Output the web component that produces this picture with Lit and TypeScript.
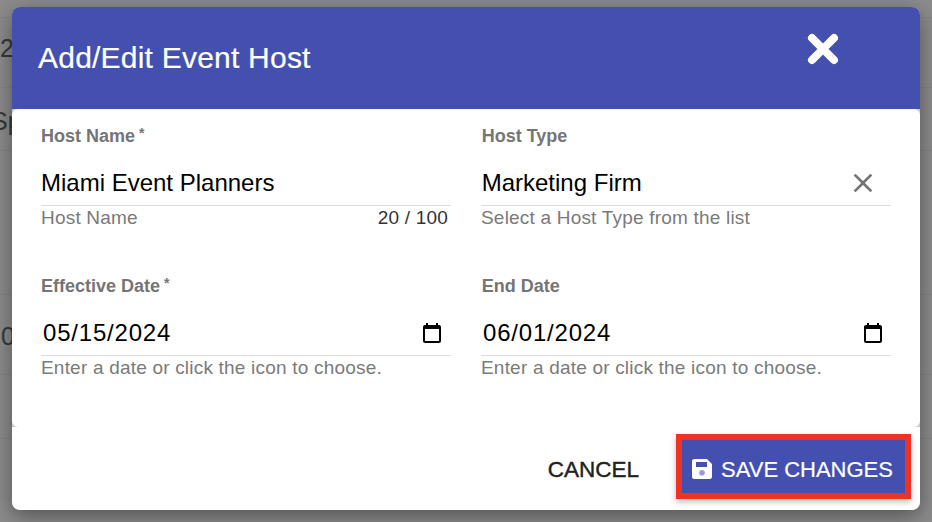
import { LitElement, html, css } from "lit";
import { customElement } from "lit/decorators.js";

const field = (label: string, req: boolean, value: string, helper: string, icon: unknown, counter = "", cls = "") => html`
  <div class="field ${cls}">
    <div class="label">${label}${req ? html`<span class="req">*</span>` : ""}</div>
    <div class="input"><span class="value">${value}</span>${icon}</div>
    <div class="help"><span>${helper}</span>${counter ? html`<span class="counter">${counter}</span>` : ""}</div>
  </div>`;

const cal = html`<svg class="cal" viewBox="0 0 24 24" width="24" height="24"><path fill="#000" fill-rule="evenodd" d="M19 4h-1V2h-2v2H8V2H6v2H5c-1.1 0-2 .9-2 2v14c0 1.1.9 2 2 2h14c1.1 0 2-.9 2-2V6c0-1.1-.9-2-2-2zm0 16H5V8h14v12z"/></svg>`;
const clear = html`<svg class="clear" viewBox="0 0 24 24" width="32" height="32"><path fill="#757575" d="M19 6.41 17.59 5 12 10.59 6.41 5 5 6.41 10.59 12 5 17.59 6.41 19 12 13.41 17.59 19 19 17.59 13.41 12z"/></svg>`;

@customElement("app-root")
export class AppRoot extends LitElement {
  static styles = css`
    :host { display: block; width: 932px; height: 522px; position: relative; overflow: hidden; background: #8c8c8c; font-family: "Liberation Sans", Arial, sans-serif; box-sizing: border-box; padding: 7px 12px 12px; }
    * { box-sizing: border-box; }
    .bg { position: absolute; font-size: 25px; color: #383838; line-height: 28px; }
    .rule { position: absolute; left: 0; width: 100%; height: 1px; background: #858585; }
    .dialog { position: relative; height: 503px; width: 908px; background: #c9c9c9; border-radius: 8px; box-shadow: 0 6px 22px rgba(0,0,0,.42); display: flex; flex-direction: column; overflow: hidden; }
    .head { height: 102px; background: #4450b0; display: flex; color: #fff; padding: 30px 26px 0; justify-content: space-between; flex: none; }
    .title { font-size: 30px; line-height: 42px; letter-spacing: .22px; -webkit-text-stroke: .2px #fff; }
    .close { margin: -4px 55px 0 0; }
    .content { height: 318px; border-radius: 6px; background: #fff; display: grid; grid-template-columns: 410px 410px; column-gap: 30px; grid-auto-rows: 150px; padding: 15px 0 0 29px; flex: none; }
    .label { font-size: 18px; font-weight: 700; color: #757575; line-height: 24px; height: 24px; }
    .req { font-size: 14px; line-height: 0; margin-left: 4px; vertical-align: 4px; }
    .input { height: 51px; margin-top: 7px; border-bottom: 1px solid #dcdcdc; display: flex; align-items: center; justify-content: space-between; padding-top: 5px; }
    .value { font-size: 24px; color: #000; line-height: 30px; }
    .help { display: flex; justify-content: space-between; font-size: 19px; letter-spacing: .2px; color: #7a7a7a; line-height: 24px; padding-right: 3px; }
    .counter { color: #333; }
    .r .label { padding-left: .7px; }
    .r .value { margin-left: .7px; }
    .r .cal { margin-right: 6px; }
    .date .value, .r.date .value { margin-left: 2px; letter-spacing: .8px; }
    .cal { margin-right: 7px; }
    .clear { margin-right: 12px; }
    .foot { flex: 1; background: #fff; display: flex; justify-content: flex-end; align-items: center; padding: 0 9px 5px 0; gap: 37px; }
    .cancel { font-size: 22.5px; padding-top: 8px; color: #212121; -webkit-text-stroke: .4px #212121; }
    .save { width: 235px; height: 65px; background: #4450b0; border: 6px solid #ee3224; color: #fff; font-size: 22px; display: flex; align-items: center; justify-content: center; gap: 9px; box-shadow: 0 3px 6px rgba(0,0,0,.25); -webkit-text-stroke: .2px #fff; padding-right: 2px; }
    .save span { padding-top: 7px; }
    .save svg { margin-top: 5px; }
  `;

  render() {
    return html`
      ${[17, 87, 150, 294, 374, 438].map((y) => html`<div class="rule" style="top:${y}px"></div>`)}
      <div class="bg" style="top:34px;left:0">2</div>
      <div class="bg" style="top:107px;left:-9px">Sp</div>
      <div class="bg" style="top:322px;left:1px">0</div>
      <div class="dialog">
        <div class="head">
          <div class="title">Add/Edit Event Host</div>
          <svg class="close" viewBox="0 0 32 32" width="32" height="32"><path d="M5 5 27 27M27 5 5 27" stroke="#fff" stroke-width="8" stroke-linecap="round"/></svg>
        </div>
        <div class="content">
          ${field("Host Name", true, "Miami Event Planners", "Host Name", "", "20 / 100")}
          ${field("Host Type", false, "Marketing Firm", "Select a Host Type from the list", clear, "", "r")}
          ${field("Effective Date", true, "05/15/2024", "Enter a date or click the icon to choose.", cal, "", "date")}
          ${field("End Date", false, "06/01/2024", "Enter a date or click the icon to choose.", cal, "", "r date")}
        </div>
        <div class="foot">
          <div class="cancel">CANCEL</div>
          <div class="save">
            <svg viewBox="0 0 20 20" width="20" height="20"><path fill="#fff" fill-rule="evenodd" d="M2.5 0H15l5 5v12.5a2.5 2.5 0 0 1-2.5 2.500h-15A2.500 2.500 0 0 1 0 17.500v-15A2.500 2.500 0 0 1 2.500 0zM4 3v5h11V3z"/><circle cx="10" cy="13.700" r="2.800" fill="#939bd8"/></svg>
            <span>SAVE CHANGES</span>
          </div>
        </div>
      </div>
    `;
  }
}
